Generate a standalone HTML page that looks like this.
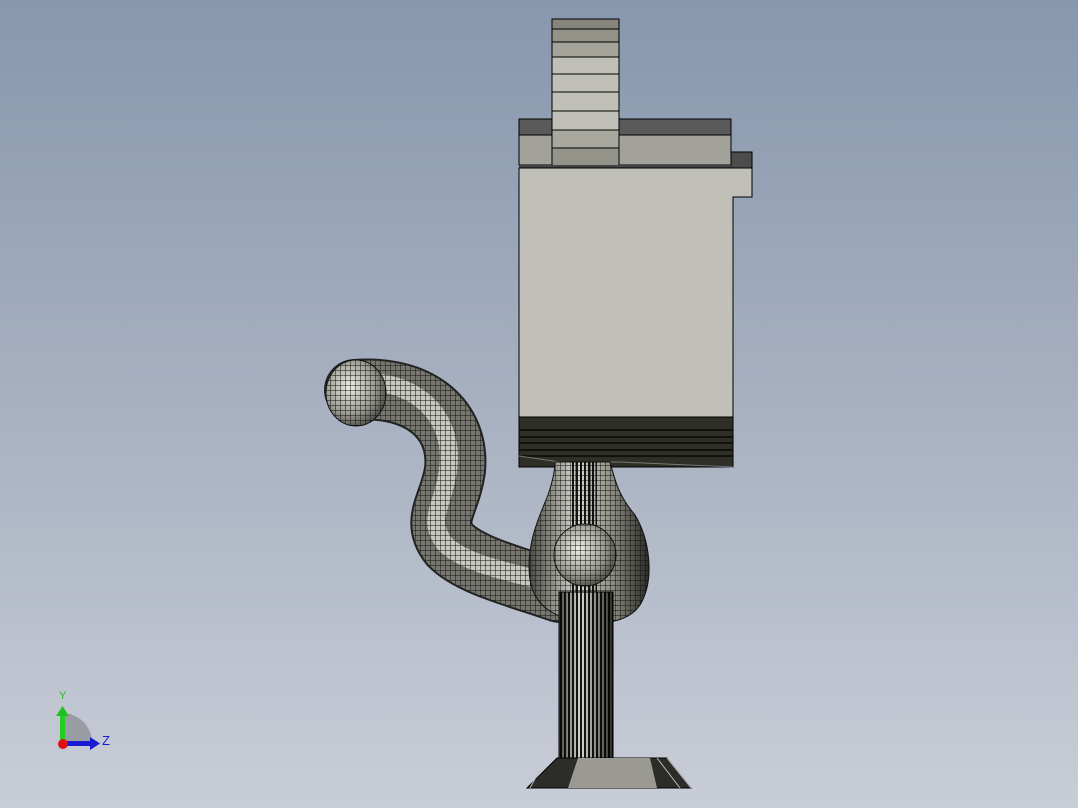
<!DOCTYPE html>
<html><head><style>
html,body{margin:0;padding:0;width:1078px;height:808px;overflow:hidden}
body{background:linear-gradient(#8797ad 0%,#a4aebf 45%,#c9cdd7 100%)}
</style></head><body>
<svg width="1078" height="808" viewBox="0 0 1078 808" xmlns="http://www.w3.org/2000/svg" style="position:absolute;left:0;top:0">
<defs>
<pattern id="mesh" width="5" height="5" patternUnits="userSpaceOnUse">
<rect width="5" height="5" fill="none"/>
<path d="M0 0H5M0 0V5" stroke="#111" stroke-width="1"/>
</pattern>
<pattern id="vl" width="4" height="10" patternUnits="userSpaceOnUse">
<path d="M1 0V10" stroke="#000" stroke-width="1.8"/>
</pattern>
<linearGradient id="pg" x1="0" y1="0" x2="1" y2="0">
<stop offset="0" stop-color="#4a4a44"/><stop offset="0.4" stop-color="#d8d8d0"/><stop offset="0.7" stop-color="#8a8a80"/><stop offset="1" stop-color="#2a2a26"/>
</linearGradient>
<radialGradient id="ball" cx="0.4" cy="0.4" r="0.7">
<stop offset="0" stop-color="#f0f0e8"/><stop offset="0.6" stop-color="#9a9a90"/><stop offset="1" stop-color="#3a3a36"/>
</radialGradient>
</defs>
<rect x="552" y="19" width="67" height="148" fill="#c0c0b8" stroke="#000" stroke-width="1"/>
<rect x="552" y="19" width="67" height="10" fill="#85857c"/>
<rect x="552" y="29" width="67" height="13" fill="#929289"/>
<rect x="552" y="42" width="67" height="15" fill="#a4a49b"/>
<rect x="552" y="148" width="67" height="19" fill="#94948b"/>
<rect x="552" y="130" width="67" height="18" fill="#a8a89f"/>
<g stroke="#000" stroke-width="1"><path d="M552 29H619M552 42H619M552 57H619M552 74H619M552 92H619M552 111H619M552 130H619M552 148H619"/></g>
<rect x="552" y="19" width="67" height="148" fill="none" stroke="#000"/>
<rect x="519" y="119" width="33" height="16" fill="#5a5a5a" stroke="#000"/>
<rect x="619" y="119" width="112" height="16" fill="#5a5a5a" stroke="#000"/>
<rect x="519" y="135" width="33" height="30" fill="#a2a29a" stroke="#000"/>
<rect x="619" y="135" width="112" height="30" fill="#a2a29a" stroke="#000"/>
<rect x="731" y="152" width="21" height="16" fill="#4c4c4c" stroke="#000"/>
<rect x="519" y="165" width="214" height="3" fill="#444"/>
<path d="M519 168H752V197H733V467H519Z" fill="#c0c0b8" stroke="#000" stroke-width="1"/>
<rect x="519" y="417" width="214" height="50" fill="#2e3028" stroke="#000"/>
<g stroke="#000" stroke-width="1.2"><path d="M519 430H733M519 437H733M519 443H733M519 450H733M519 456H733"/></g>
<path d="M519 456L560 462H620L733 467" stroke="#777" fill="none"/>
<path d="M355 390C420 385 460 420 455 470C450 505 430 520 450 545C470 565 510 575 560 592" fill="none" stroke="#222" stroke-width="62" stroke-linecap="round"/>
<path d="M355 390C420 385 460 420 455 470C450 505 430 520 450 545C470 565 510 575 560 592" fill="none" stroke="#77776f" stroke-width="58" stroke-linecap="round"/>
<path d="M360 382C420 380 455 420 448 470C444 505 425 520 446 545C468 565 510 572 560 585" fill="none" stroke="#c8c8c0" stroke-width="18"/>
<path d="M355 390C420 385 460 420 455 470C450 505 430 520 450 545C470 565 510 575 560 592" fill="none" stroke="url(#mesh)" stroke-width="58" stroke-linecap="round"/>
<ellipse cx="356" cy="393" rx="30" ry="33" fill="url(#ball)" stroke="#111"/>
<ellipse cx="356" cy="393" rx="30" ry="33" fill="url(#mesh)"/>
<path d="M555 462H610C615 480 618 495 635 515C650 540 655 580 640 605C630 620 610 624 590 622C560 620 535 610 530 580C525 545 540 515 548 495C553 480 555 470 555 462Z" fill="url(#pg)" stroke="#111"/>
<path d="M555 462H610C615 480 618 495 635 515C650 540 655 580 640 605C630 620 610 624 590 622C560 620 535 610 530 580C525 545 540 515 548 495C553 480 555 470 555 462Z" fill="url(#mesh)"/>
<rect x="572" y="462" width="25" height="130" fill="url(#vl)"/>
<circle cx="585" cy="555" r="31" fill="url(#ball)" stroke="#111"/>
<circle cx="585" cy="555" r="31" fill="url(#mesh)"/>
<rect x="559" y="592" width="54" height="166" fill="url(#pg)" stroke="#000"/>
<rect x="559" y="592" width="54" height="166" fill="url(#vl)"/>
<path d="M557 758H667L691 788H527Z" fill="#2c2c28" stroke="#000"/>
<path d="M578 758H650L657 788H568Z" fill="#9a9a92"/>
<path d="M657 758L680 788M667 758L691 788M540 770L530 788" stroke="#bbb" stroke-width="1"/>
<path d="M62 743V713A30 30 0 0 1 92 743Z" fill="#9a9ca3"/>
<rect x="60" y="715" width="5" height="28" fill="#20d020"/>
<path d="M56 716L62.5 706L69 716Z" fill="#20c020"/>
<rect x="62" y="741" width="30" height="5" fill="#1a1ad0"/>
<path d="M90 737L100 743.5L90 750Z" fill="#1a1ad0"/>
<circle cx="63" cy="744" r="5" fill="#e01010"/>
<text x="59" y="699" font-family="Liberation Sans,sans-serif" font-size="11" fill="#20c020">Y</text>
<text x="102" y="745" font-family="Liberation Sans,sans-serif" font-size="13" fill="#1a1ad0">Z</text>
</svg>
</body></html>
